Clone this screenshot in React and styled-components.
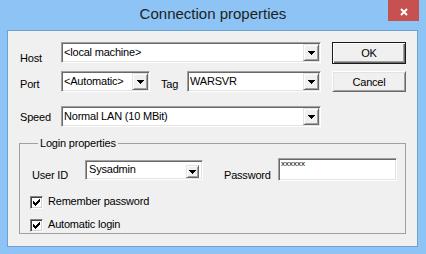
import React from 'react'
import styled, { createGlobalStyle } from 'styled-components'

const GlobalStyle = createGlobalStyle`
  html, body {
    margin: 0;
    padding: 0;
  }
  body {
    width: 426px;
    height: 254px;
    overflow: hidden;
    background: #8dc4f5;
  }
`

const Window = styled.div`
  width: 426px;
  height: 254px;
  box-sizing: border-box;
  display: flex;
  flex-direction: column;
  padding-bottom: 7px;
  background: #8dc4f5;
  font-family: "Liberation Sans", Arial, sans-serif;
  font-size: 11px;
  letter-spacing: -0.2px;
  color: #000;
`

const TitleBar = styled.div`
  height: 30px;
  flex-shrink: 0;
  display: grid;
  grid-template-columns: 1fr auto 1fr;
`

const Title = styled.div`
  grid-column: 2;
  align-self: start;
  margin-top: 5px;
  font-size: 15px;
  line-height: 18px;
  letter-spacing: 0;
  color: #1e1e1e;
  white-space: nowrap;
`

const CloseButton = styled.div`
  grid-column: 3;
  justify-self: end;
  width: 31px;
  height: 21px;
  margin-right: 7px;
  box-sizing: border-box;
  padding-top: 2px;
  background: #c75050;
  display: flex;
  align-items: center;
  justify-content: center;
`

const Client = styled.div`
  flex: 1;
  margin: 0 8px 0 7px;
  border: 1px solid #6fa0d2;
  background: #f0f0f0;
  padding: 11px 11px 0 11px;
  display: flex;
  flex-direction: column;
`

const TopArea = styled.div`
  display: flex;
  align-items: flex-start;
  gap: 11px;
`

const Form = styled.div`
  width: 302px;
  display: flex;
  flex-direction: column;
`

const Row = styled.div`
  display: flex;
  align-items: flex-start;
  height: ${p => p.$h}px;
  margin-top: ${p => p.$top || 0}px;
`

const Label = styled.div`
  flex-shrink: 0;
  box-sizing: border-box;
  width: ${p => p.$w}px;
  padding-top: ${p => p.$pt}px;
  padding-left: ${p => p.$pl || 0}px;
  margin-left: ${p => p.$ml || 0}px;
  line-height: 13px;
  white-space: nowrap;
`

const ComboBox = styled.div`
  display: flex;
  box-sizing: border-box;
  height: ${p => p.$h || 21}px;
  width: ${p => (p.$w ? `${p.$w}px` : 'auto')};
  flex: ${p => (p.$w ? 'none' : 1)};
  margin-top: ${p => p.$mt || 0}px;
  padding: 1px;
  background: #fff;
  border: 1px solid;
  border-color: #a0a0a0 #fff #fff #a0a0a0;
  box-shadow: inset 1px 1px #696969, inset -1px -1px #e3e3e3;
`

const ComboText = styled.div`
  flex: 1;
  padding-left: ${p => p.$pl || 1}px;
  line-height: ${p => p.$lh || 17}px;
  white-space: nowrap;
  overflow: hidden;
`

const DropButton = styled.div`
  flex-shrink: 0;
  box-sizing: border-box;
  width: ${p => (p.$small ? 13 : 16)}px;
  height: ${p => (p.$small ? '13px' : '100%')};
  align-self: flex-end;
  margin-right: ${p => (p.$small ? 2 : 0)}px;
  background: #f0f0f0;
  border: 1px solid;
  border-color: #e3e3e3 #696969 #696969 #e3e3e3;
  box-shadow: inset 1px 1px #fff, inset -1px -1px #a0a0a0;
  display: flex;
  align-items: center;
  justify-content: center;
`

const ButtonStack = styled.div`
  width: 74px;
  display: flex;
  flex-direction: column;
  gap: 7px;
`

const PushButton = styled.div`
  height: ${p => p.$h}px;
  box-sizing: border-box;
  display: flex;
  align-items: center;
  justify-content: center;
  background: #f0f0f0;
  border: 1px solid;
  border-color: ${p => (p.$default ? '#1a1a1a' : '#fff #696969 #696969 #fff')};
  box-shadow: ${p =>
    p.$default
      ? 'inset 1px 1px #fff, inset -1px -1px #696969, inset -2px -2px #a0a0a0'
      : 'inset 1px 1px #e3e3e3, inset -1px -1px #a0a0a0'};
`

const Group = styled.fieldset`
  margin: 10px 0 0 0;
  padding: 8px 0 1px 12px;
  border: 1px solid #a0a0a0;
  min-width: 0;
`

const Legend = styled.legend`
  margin-left: 6px;
  padding: 0 2px;
  line-height: 13px;
`

const PassField = styled.div`
  width: 119px;
  height: 23px;
  box-sizing: border-box;
  padding: 0 2px;
  background: #fff;
  border: 1px solid;
  border-color: #a0a0a0 #fff #fff #a0a0a0;
  box-shadow: inset 1px 1px #696969, inset -1px -1px #e3e3e3;
  font-size: 8px;
  line-height: 9px;
  letter-spacing: 0;
`

const CheckRow = styled.div`
  display: flex;
  align-items: flex-start;
  gap: 5px;
  height: 13px;
  margin-left: -2px;
  margin-top: ${p => p.$top}px;
`

const CheckBox = styled.div`
  width: 13px;
  height: 13px;
  box-sizing: border-box;
  background: #fff;
  border: 1px solid;
  border-color: #808080 #fff #fff #808080;
  box-shadow: inset 1px 1px #404040, inset -1px -1px #d4d0c8;
  display: flex;
  align-items: center;
  justify-content: center;
`

const CheckText = styled.div`
  line-height: 13px;
  margin-top: -1px;
  white-space: nowrap;
`

const Arrow = () => (
  <svg width="7" height="4" viewBox="0 0 7 4" shapeRendering="crispEdges">
    <path d="M0 0h7v1H0z M1 1h5v1H1z M2 2h3v1H2z M3 3h1v1H3z" fill="#000" />
  </svg>
)

const CheckMark = () => (
  <svg width="7" height="7" viewBox="0 0 7 7" shapeRendering="crispEdges">
    <path
      d="M6 0h1v1h-1z M5 1h2v1h-2z M0 2h1v1H0z M4 2h3v1H4z M0 3h2v1H0z M3 3h3v1H3z M0 4h5v1H0z M1 5h3v1H1z M2 6h1v1H2z"
      fill="#000"
    />
  </svg>
)

const Combo = ({ value, w, small, h, mt }) => (
  <ComboBox $w={w} $h={h} $mt={mt}>
    <ComboText $pl={small ? 2 : 1} $lh={small ? 14 : 17}>{value}</ComboText>
    <DropButton $small={small}>
      <Arrow />
    </DropButton>
  </ComboBox>
)

const Check = ({ label, top }) => (
  <CheckRow $top={top}>
    <CheckBox>
      <CheckMark />
    </CheckBox>
    <CheckText>{label}</CheckText>
  </CheckRow>
)

export default function App() {
  return (
    <>
      <GlobalStyle />
      <Window>
        <TitleBar>
          <Title>Connection properties</Title>
          <CloseButton>
            <svg width="8" height="8" viewBox="0 0 8 8">
              <path d="M1 1L7 7M7 1L1 7" stroke="#fff" strokeWidth="2" />
            </svg>
          </CloseButton>
        </TitleBar>
        <Client>
          <TopArea>
            <Form>
              <Row $h={21}>
                <Label $w={42} $pt={10} $pl={1}>Host</Label>
                <Combo value="<local machine>" />
              </Row>
              <Row $h={21} $top={8}>
                <Label $w={42} $pt={7} $pl={1}>Port</Label>
                <Combo value="<Automatic>" w={89} />
                <Label $w={26} $pt={7} $ml={11}>Tag</Label>
                <Combo value="WARSVR" />
              </Row>
              <Row $h={21} $top={14}>
                <Label $w={42} $pt={5} $pl={1}>Speed</Label>
                <Combo value="Normal LAN (10 MBit)" />
              </Row>
            </Form>
            <ButtonStack>
              <PushButton $default $h={22}>OK</PushButton>
              <PushButton $h={21}>Cancel</PushButton>
            </ButtonStack>
          </TopArea>
          <Group>
            <Legend>Login properties</Legend>
            <Row $h={23}>
              <Label $w={53} $pt={11}>User ID</Label>
              <Combo value="Sysadmin" w={118} h={20} mt={2} small />
              <Label $w={54} $pt={11} $ml={21}>Password</Label>
              <PassField>xxxxxx</PassField>
            </Row>
            <Check label="Remember password" top={15} />
            <Check label="Automatic login" top={10} />
          </Group>
        </Client>
      </Window>
    </>
  )
}
